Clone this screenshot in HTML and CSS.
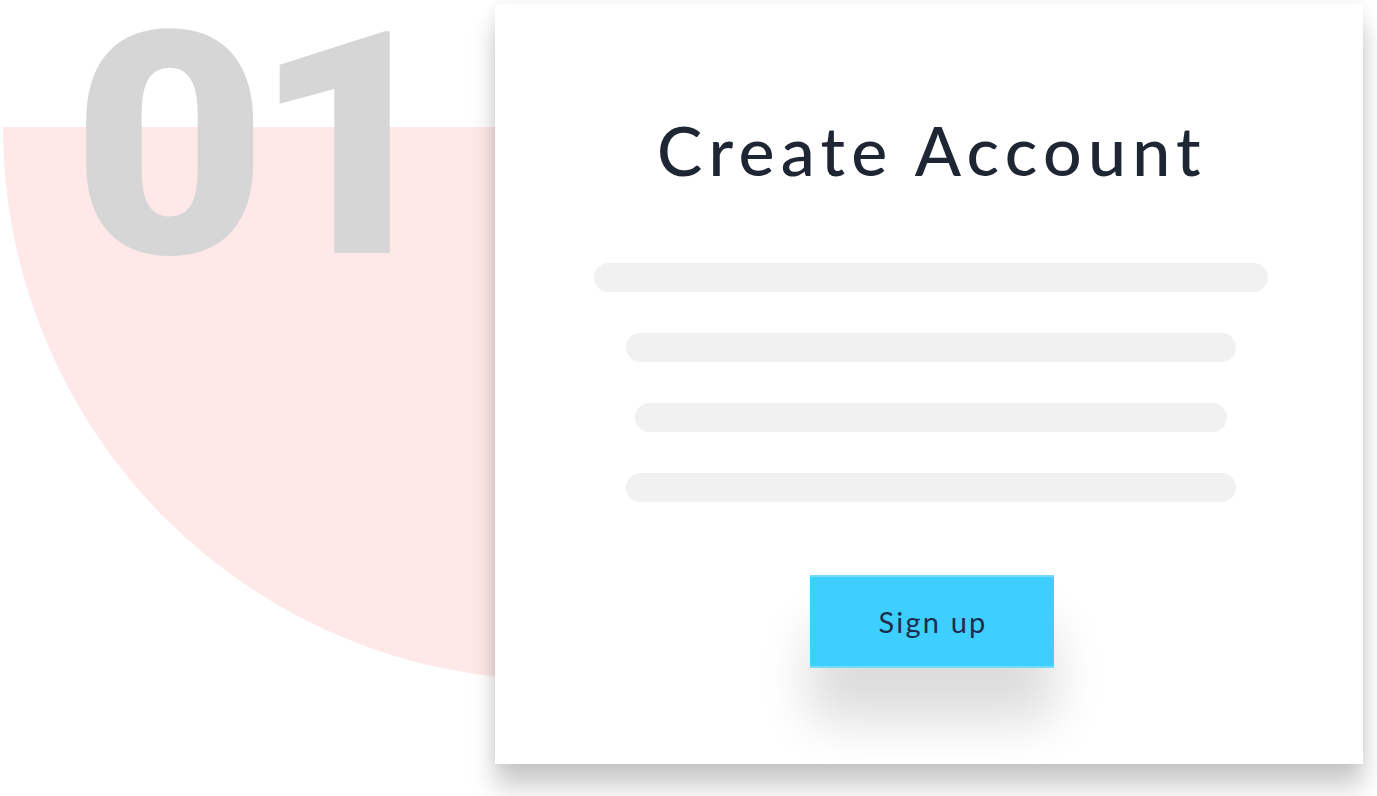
FILE: index.html
```html
<!DOCTYPE html>
<html lang="en">
<head>
<meta charset="utf-8">
<title>Create Account</title>
<link rel="stylesheet" href="styles.css">
</head>
<body>
<div class="scene">
  <div class="blob"></div>
  <div class="step-number">01</div>
  <div class="card">
    <h1 class="card-title">Create Account</h1>
    <div class="fields">
      <div class="field field-wide"></div>
      <div class="field field-mid"></div>
      <div class="field field-narrow"></div>
      <div class="field field-mid"></div>
    </div>
    <button class="signup-btn" type="button">Sign up</button>
  </div>
</div>
</body>
</html>
```
FILE: styles.css
```css
html, body {
  margin: 0;
  padding: 0;
  background: #ffffff;
}
body {
  width: 1377px;
  height: 796px;
  overflow: hidden;
  font-family: Lato, "Liberation Sans", sans-serif;
}
.scene {
  position: relative;
  width: 1377px;
  height: 796px;
  padding: 4px 0 0 495px;
  box-sizing: border-box;
  overflow: hidden;
}
.blob {
  position: absolute;
  left: 3px;
  top: 127px;
  width: 1106px;
  height: 553px;
  border-radius: 0 0 553px 553px;
  background: #fee8e8;
}
.step-number {
  position: absolute;
  left: 72px;
  top: 7px;
  padding: 0 30px 0 0;
  font-family: Roboto, "Liberation Sans", sans-serif;
  font-weight: 900;
  font-size: 312px;
  line-height: 0.9;
  letter-spacing: -14px;
  white-space: nowrap;
  color: #d6d6d6;
  transform: scaleX(1.08);
  transform-origin: left top;
}
.card {
  position: relative;
  width: 868px;
  height: 760px;
  box-sizing: border-box;
  background: #ffffff;
  box-shadow: 0 22px 24px rgba(0, 0, 0, 0.21), 0 0 12px rgba(0, 0, 0, 0.06);
  display: flex;
  flex-direction: column;
  align-items: center;
  padding-top: 108px;
}
.card-title {
  margin: 0 0 0 6px;
  font-family: Lato, "Liberation Sans", sans-serif;
  font-weight: 500;
  font-size: 68px;
  line-height: 76px;
  letter-spacing: 6.3px;
  color: #1f2633;
}
.fields {
  display: flex;
  flex-direction: column;
  align-items: center;
  gap: 41px;
  margin-top: 75px;
  margin-left: 4px;
}
.field {
  height: 29px;
  border-radius: 15px;
  background: #f1f1f1;
}
.field-wide { width: 674px; }
.field-mid { width: 610px; }
.field-narrow { width: 592px; }
.signup-btn {
  margin-top: 73px;
  margin-left: 6px;
  width: 244px;
  height: 93px;
  border: 0;
  border-top: 2px solid #74ddff;
  border-bottom: 2px solid #74ddff;
  background: #3ccfff;
  font-family: Lato, "Liberation Sans", sans-serif;
  font-size: 29px;
  letter-spacing: 2.2px;
  color: #1e2d4c;
  box-shadow: 0 52px 50px rgba(0, 0, 0, 0.14);
  padding: 0 0 0 2px;
  cursor: pointer;
}
```
